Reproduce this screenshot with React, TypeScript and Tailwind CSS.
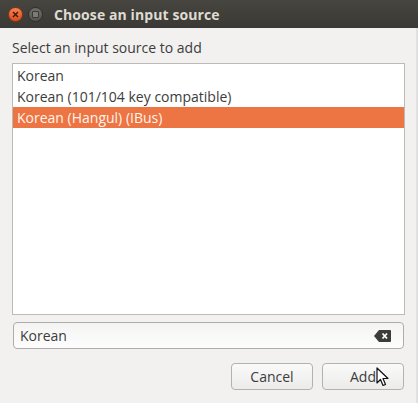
import React from "react";

const sources = [
  "Korean",
  "Korean (101/104 key compatible)",
  "Korean (Hangul) (IBus)",
];

const ClearIcon = () => (
  <svg width="17" height="12" viewBox="0 0 17 12">
    <path d="M5 0 H16 a1 1 0 0 1 1 1 V11 a1 1 0 0 1 -1 1 H5 L0 6 Z" fill="#3c3c3c" />
    <path d="M8.5 3.5 L13 8.5 M13 3.5 L8.5 8.5" stroke="#ffffff" strokeWidth="1.8" />
  </svg>
);

const Cursor = () => (
  <svg width="14" height="20" viewBox="0 0 14 20" className="absolute left-[53px] top-[3px]">
    <path
      d="M1 1 L1 16 L4.5 12.5 L7 18.5 L9.5 17.5 L7 11.5 L12 11.5 Z"
      fill="#ffffff"
      stroke="#111111"
      strokeWidth="1.2"
      strokeLinejoin="round"
    />
  </svg>
);

export default function App() {
  return (
    <div
      className="w-[418px] h-[403px] flex flex-col bg-[#f2f1f0] overflow-hidden"
      style={{ fontFamily: '"Open Sans", "DejaVu Sans", sans-serif' }}
    >
      {/* title bar */}
      <div className="h-[28px] flex items-center bg-gradient-to-b from-[#46453f] to-[#3a3935] shrink-0">
        <div className="ml-[8px] w-[15px] h-[15px] rounded-full bg-gradient-to-b from-[#f6834f] to-[#dc4a1c] border border-[#8c3317] flex items-center justify-center">
          <svg width="7" height="7" viewBox="0 0 7 7">
            <path d="M1 1 L6 6 M6 1 L1 6" stroke="#3a1a0c" strokeWidth="1.4" />
          </svg>
        </div>
        <div className="ml-[5px] w-[15px] h-[15px] rounded-full bg-gradient-to-b from-[#6f6e69] to-[#55544f] border border-[#2f2e2b] flex items-center justify-center">
          <div className="w-[7px] h-[7px] rounded-[1px] border border-[#3a3935] bg-[#7c7b76]" />
        </div>
        <span className="ml-[11px] text-[14px] font-bold text-[#dfdbd2] tracking-[0.1px]">
          Choose an input source
        </span>
      </div>

      {/* body */}
      <div className="flex flex-col flex-1 pl-[12px] pr-[11px] border-r-2 border-[#e2e1df]">
        <div className="h-[35px] flex items-end pb-[5px] text-[14px] text-[#3c3c3c]">
          Select an input source to add
        </div>
        <div className="h-[252px] bg-white border border-[#bcbbb8] pt-[1px]">
          {sources.map((s, i) => (
            <div
              key={s}
              className={`h-[21px] flex items-center pl-[4px] text-[14px] ${
                i === 2 ? "bg-[#ec7543] text-[#fff3ec]" : "text-[#3c3c3c]"
              }`}
            >
              {s}
            </div>
          ))}
        </div>

        <div className="mt-[7px] ml-[1px] mr-[1px] h-[27px] flex items-center justify-between rounded-[4px] border border-[#aeadab] bg-gradient-to-b from-[#f4f4f3] to-[#fdfdfd] pl-[6px] pr-[12px]">
          <span className="text-[14px] text-[#3c3c3c]">Korean</span>
          <ClearIcon />
        </div>

        <div className="mt-[14px] flex justify-end gap-[9px] mr-[1px]">
          <button className="w-[82px] h-[27px] rounded-[4px] border border-[#b3b2af] bg-gradient-to-b from-[#fafafa] to-[#ecebea] text-[14px] text-[#3c3c3c]">
            Cancel
          </button>
          <button className="relative w-[82px] h-[27px] rounded-[4px] border border-[#b3b2af] bg-gradient-to-b from-[#fafafa] to-[#ecebea] text-[14px] text-[#3c3c3c]">
            Add
            <Cursor />
          </button>
        </div>
      </div>
    </div>
  );
}
